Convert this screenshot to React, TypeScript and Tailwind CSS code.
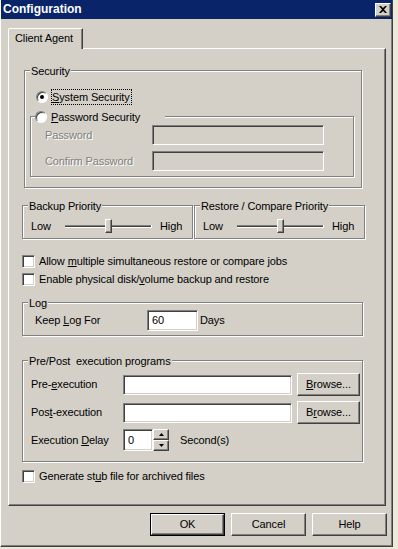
import React from "react";

type Kids = { children?: React.ReactNode; className?: string };

const etchedText = "text-[#808080] [text-shadow:1px_1px_0_#fff]";
const sunken =
  "border border-t-[#808080] border-l-[#808080] border-b-white border-r-white shadow-[inset_1px_1px_0_#404040,inset_-1px_-1px_0_#d4d0c8]";
const raised =
  "border border-t-white border-l-white border-b-[#404040] border-r-[#404040] shadow-[inset_-1px_-1px_0_#808080] bg-[#d4d0c8]";

function GroupBox({
  label,
  legendClass = "-top-[6px] left-[5px] px-[1px]",
  className,
  children,
}: Kids & { label: React.ReactNode; legendClass?: string }) {
  return (
    <div className={`relative border border-[#808080] shadow-[1px_1px_0_#fff,inset_1px_1px_0_#fff] ${className ?? ""}`}>
      <div className={`absolute bg-[#d4d0c8] leading-[13px] whitespace-pre ${legendClass}`}>{label}</div>
      {children}
    </div>
  );
}

function Field({ className, disabled, children }: Kids & { disabled?: boolean }) {
  return (
    <div className={`${sunken} ${disabled ? "bg-[#d4d0c8]" : "bg-white"} flex items-center ${className ?? ""}`}>
      {children}
    </div>
  );
}

function Btn({ className, children }: Kids) {
  return <div className={`${raised} flex items-center justify-center ${className ?? ""}`}>{children}</div>;
}

function Check() {
  return <div className={`w-[13px] h-[13px] shrink-0 bg-white ${sunken}`} />;
}

function Radio({ checked }: { checked?: boolean }) {
  return (
    <div className="w-[12px] h-[12px] shrink-0 rounded-full bg-white border border-t-[#808080] border-l-[#808080] border-b-white border-r-white shadow-[inset_1px_1px_0_#404040] flex items-center justify-center">
      {checked && <div className="w-[4px] h-[4px] rounded-full bg-black" />}
    </div>
  );
}

function Slider({ thumb }: { thumb: number }) {
  return (
    <div className="relative w-[86px] h-[20px] flex items-center">
      <div className="w-full h-[3px] bg-[#404040] border-t border-t-[#808080] border-b border-b-white shadow-[1px_0_0_#fff]" />
      <div
        className={`absolute top-[3px] w-[7px] h-[14px] ${raised}`}
        style={{ left: thumb }}
      />
    </div>
  );
}

function PriorityBox({ label }: { label: string }) {
  return (
    <GroupBox label={label} className="w-[171px] h-[34px]">
      <div className="mt-[10px] ml-[8px] h-[20px] flex items-center">
        <span className="w-[34px]">Low</span>
        <Slider thumb={40} />
        <span className="ml-[9px]">High</span>
      </div>
    </GroupBox>
  );
}

function CloseBtn() {
  return (
    <div className={`w-[16px] h-[14px] ${raised} flex items-center justify-center`}>
      <svg width="8" height="7" viewBox="0 0 8 7">
        <path d="M0 0h2l2 2 2-2h2L5 3.5 8 7H6L4 5 2 7H0l3-3.5z" fill="#000" />
      </svg>
    </div>
  );
}

export default function App() {
  return (
    <div className="w-[398px] h-[549px] overflow-hidden bg-[#ece9d8] font-['Liberation_Sans',Arial,sans-serif] text-[11px] leading-[13px] tracking-[-0.12px] text-black">
      <div className="w-[393px] h-[547px] flex flex-col bg-[#d4d0c8] border-l border-l-white border-r border-r-[#404040] border-b border-b-[#404040] shadow-[inset_-1px_-1px_0_#808080]">
        {/* title bar */}
        <div className="h-[19px] shrink-0 bg-[#0a246a] flex items-center justify-between pl-[2px] pr-[1px]">
          <span className="text-white font-bold text-[12px] tracking-normal">Configuration</span>
          <CloseBtn />
        </div>

        {/* tab */}
        <div className="relative z-10 ml-[7px] mt-[9px] -mb-[1px] w-[75px] h-[21px] bg-[#d4d0c8] border-t border-l border-white border-r border-r-[#404040] shadow-[inset_-1px_0_0_#808080] rounded-tl-[2px] pl-[6px] pt-[3px]">
          Client Agent
        </div>

        {/* tab panel */}
        <div className="ml-[7px] w-[378px] h-[458px] shrink-0 flex flex-col border border-t-white border-l-white border-r-[#404040] border-b-[#404040] shadow-[inset_-1px_-1px_0_#808080]">
          <GroupBox label="Security" className="mt-[21px] ml-[15px] w-[338px] h-[118px]">
            <div className="mt-[18px] ml-[11px] h-[16px] flex items-center">
              <Radio checked />
              <span className="ml-[3px] h-[16px] flex items-center border border-dotted border-black pr-[1px]">
                <u>S</u>ystem Security
              </span>
            </div>

            <GroupBox
              label={
                <div className="flex items-center h-[14px] w-[130px]">
                  <Radio />
                  <span className="ml-[4px]">
                    <u>P</u>assword Security
                  </span>
                </div>
              }
              legendClass="-top-[7px] left-[4px]"
              className="mt-[11px] ml-[5px] w-[324px] h-[61px]"
            >
              <div className="mt-[8px] ml-[14px] h-[20px] flex items-center">
                <span className={`w-[107px] ${etchedText}`}>Password</span>
                <Field disabled className="w-[172px] h-[20px]" />
              </div>
              <div className="mt-[6px] ml-[14px] h-[20px] flex items-center">
                <span className={`w-[107px] ${etchedText}`}>Confirm Password</span>
                <Field disabled className="w-[172px] h-[20px]" />
              </div>
            </GroupBox>
          </GroupBox>

          <div className="mt-[17px] ml-[13px] flex gap-[1px]">
            <PriorityBox label="Backup Priority" />
            <PriorityBox label="Restore / Compare Priority" />
          </div>

          <div className="mt-[16px] ml-[13px] h-[13px] flex items-center">
            <Check />
            <span className="ml-[4px]">
              Allow <u>m</u>ultiple simultaneous restore or compare jobs
            </span>
          </div>
          <div className="mt-[5px] ml-[13px] h-[13px] flex items-center">
            <Check />
            <span className="ml-[4px]">
              Enable physical disk/<u>v</u>olume backup and restore
            </span>
          </div>

          <GroupBox label="Log" className="mt-[16px] ml-[13px] w-[341px] h-[34px]">
            <div className="mt-[7px] ml-[12px] h-[21px] flex items-center">
              <span className="w-[112px]">
                Keep <u>L</u>og For
              </span>
              <Field className="w-[51px] h-[21px] pl-[4px]">60</Field>
              <span className="ml-[2px]">Days</span>
            </div>
          </GroupBox>

          <GroupBox label="Pre/Post  execution programs" className="mt-[24px] ml-[13px] w-[341px] h-[102px]">
            <div className="mt-[12px] ml-[8px] h-[23px] flex items-center">
              <span className="w-[92px]">
                Pre-<u>e</u>xecution
              </span>
              <Field className="w-[169px] h-[20px]" />
              <Btn className="ml-[5px] w-[63px] h-[23px]">
                <span>
                  <u>B</u>rowse...
                </span>
              </Btn>
            </div>
            <div className="mt-[5px] ml-[8px] h-[23px] flex items-center">
              <span className="w-[92px]">
                Pos<u>t</u>-execution
              </span>
              <Field className="w-[169px] h-[20px]" />
              <Btn className="ml-[5px] w-[63px] h-[23px]">
                <span>
                  B<u>r</u>owse...
                </span>
              </Btn>
            </div>
            <div className="mt-[5px] ml-[8px] h-[22px] flex items-center">
              <span className="w-[92px]">
                Execution <u>D</u>elay
              </span>
              <Field className="w-[30px] h-[22px] pl-[4px]">0</Field>
              <div className="w-[16px] h-[22px] flex flex-col">
                <Btn className="h-[11px]">
                  <svg width="5" height="3" viewBox="0 0 5 3">
                    <path d="M2.5 0L5 3H0z" fill="#000" />
                  </svg>
                </Btn>
                <Btn className="h-[11px]">
                  <svg width="5" height="3" viewBox="0 0 5 3">
                    <path d="M0 0h5L2.5 3z" fill="#000" />
                  </svg>
                </Btn>
              </div>
              <span className="ml-[11px]">Second(s)</span>
            </div>
          </GroupBox>

          <div className="mt-[8px] ml-[13px] h-[13px] flex items-center">
            <Check />
            <span className="ml-[4px]">
              Generate st<u>u</u>b file for archived files
            </span>
          </div>
        </div>

        {/* dialog buttons */}
        <div className="mt-[7px] ml-[7px] w-[379px] flex justify-end gap-[6px]">
          <div className="w-[75px] h-[23px] border border-black">
            <Btn className="w-full h-full">OK</Btn>
          </div>
          <Btn className="w-[75px] h-[23px]">Cancel</Btn>
          <Btn className="w-[75px] h-[23px]">Help</Btn>
        </div>
      </div>
    </div>
  );
}
